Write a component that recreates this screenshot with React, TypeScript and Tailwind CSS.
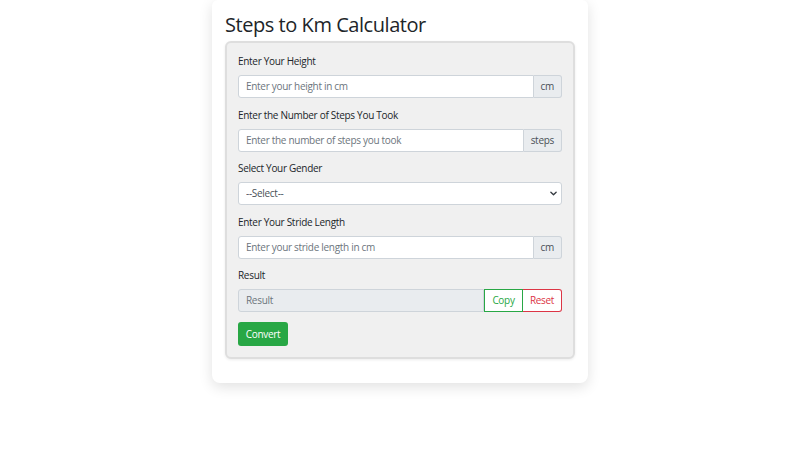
import React from 'react';

const font = { fontFamily: '"Open Sans", "Noto Sans", sans-serif' };

const Label: React.FC<{ children: React.ReactNode }> = ({ children }) => (
  <label className="block text-[10px] leading-[15px] tracking-[-0.3px] text-[#212529] mb-[6px]">{children}</label>
);

const InputGroup: React.FC<{ placeholder: string; addon: string }> = ({ placeholder, addon }) => (
  <div className="flex h-[23px]">
    <input
      type="text"
      placeholder={placeholder}
      className="block flex-1 min-w-0 bg-white border border-[#ced4da] rounded-l-[3px] px-[7px] text-[10px] tracking-[-0.3px] text-[#495057] placeholder:text-[#6c757d] outline-none"
    />
    <span className="flex items-center px-[7px] bg-[#e9ecef] border border-l-0 border-[#ced4da] rounded-r-[3px] text-[10px] tracking-[-0.3px] text-[#495057]">
      {addon}
    </span>
  </div>
);

export default function App() {
  return (
    <div className="min-h-[450px] bg-white" style={font}>
      <div className="mx-auto w-[376px] bg-white rounded-b-[8px] rounded-t-[6px] shadow-[0_4px_14px_rgba(0,0,0,0.12)] px-[13px] pt-[13px] pb-[24px]">
        <h1 className="text-[20px] leading-[24px] tracking-[-0.45px] text-[#212529] mb-[4px]">Steps to Km Calculator</h1>

        <div className="bg-[#f0f0f0] border-2 border-[#dedede] rounded-[6px] shadow-[0_1px_3px_rgba(0,0,0,0.08)] p-[11px]">
          <div className="mb-[9.5px]">
            <Label>Enter Your Height</Label>
            <InputGroup placeholder="Enter your height in cm" addon="cm" />
          </div>

          <div className="mb-[9.5px]">
            <Label>Enter the Number of Steps You Took</Label>
            <InputGroup placeholder="Enter the number of steps you took" addon="steps" />
          </div>

          <div className="mb-[9.5px]">
            <Label>Select Your Gender</Label>
            <div className="relative h-[23px]">
              <select className="block appearance-none w-full h-full bg-white border border-[#ced4da] rounded-[3px] px-[7px] text-[10px] tracking-[-0.3px] text-[#495057] outline-none">
                <option>--Select--</option>
                <option>Male</option>
                <option>Female</option>
              </select>
              <svg className="absolute right-[5px] top-[9px] w-[7px] h-[5px] pointer-events-none" viewBox="0 0 16 10" fill="none">
                <path d="M2 2l6 6 6-6" stroke="#343a40" strokeWidth="3" strokeLinecap="round" strokeLinejoin="round" />
              </svg>
            </div>
          </div>

          <div className="mb-[9.5px]">
            <Label>Enter Your Stride Length</Label>
            <InputGroup placeholder="Enter your stride length in cm" addon="cm" />
          </div>

          <div className="mb-[10px]">
            <Label>Result</Label>
            <div className="flex h-[23px]">
              <input
                type="text"
                placeholder="Result"
                readOnly
                className="block flex-1 min-w-0 bg-[#e9ecef] border border-[#ced4da] rounded-l-[3px] px-[7px] text-[10px] tracking-[-0.3px] placeholder:text-[#6c757d] outline-none"
              />
              <button className="w-[39px] bg-white border border-[#28a745] text-[#28a745] text-[10px] tracking-[-0.3px]">Copy</button>
              <button className="w-[39px] bg-white border border-l-0 border-[#dc3545] text-[#dc3545] text-[10px] tracking-[-0.3px] rounded-r-[3px]">Reset</button>
            </div>
          </div>

          <button className="block h-[24px] w-[50px] bg-[#28a745] text-white text-[10px] tracking-[-0.3px] rounded-[3px]">Convert</button>
        </div>
      </div>
    </div>
  );
}
